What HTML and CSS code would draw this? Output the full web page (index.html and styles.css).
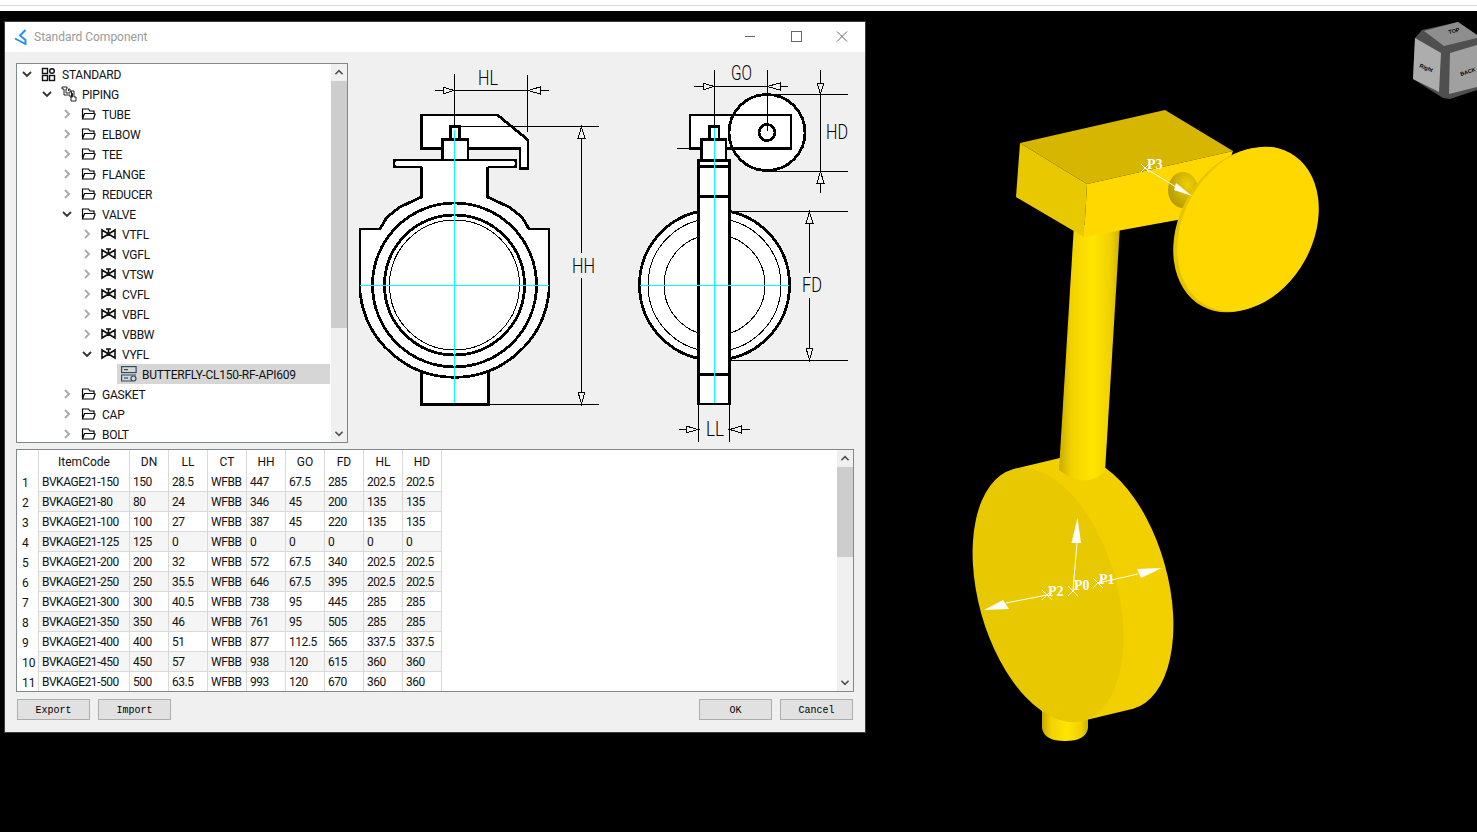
FILE: index.html
```html
<!DOCTYPE html>
<html lang="en">
<head>
<meta charset="utf-8">
<title>Standard Component</title>
<link rel="stylesheet" href="styles.css">
</head>
<body>
<svg class="defs" width="0" height="0" aria-hidden="true">
  <defs>
    <symbol id="ch-right" viewBox="0 0 10 12"><path d="M3 2l4 4-4 4" fill="none" stroke="currentColor" stroke-width="1.8"/></symbol>
    <symbol id="ch-down" viewBox="0 0 12 10"><path d="M2 3l4 4 4-4" fill="none" stroke="currentColor" stroke-width="1.8"/></symbol>
    <symbol id="ch-up" viewBox="0 0 12 10"><path d="M2 7l4-4 4 4" fill="none" stroke="currentColor" stroke-width="1.8"/></symbol>
    <symbol id="folder" viewBox="0 0 15 12"><path d="M1.5 11V1h6l1.500 2h4v2.500H3.500L1.500 11h11l1.800-5.500" fill="none" stroke="#000" stroke-width="1.200"/></symbol>
    <symbol id="valve" viewBox="0 0 15 12"><path d="M1 1.500v9M14 1.500v9M1 2l13 8M1 10l13-8M7.500 6V1.500M5 1h5M1 2v8l6.500-4zM14 2v8L7.500 6z" fill="none" stroke="#111" stroke-width="1.600"/></symbol>
    <symbol id="comp" viewBox="0 0 16 16"><g fill="none" stroke="#2f4d63" stroke-width="1.200"><rect x=".6" y=".6" width="14.500" height="6"/><path d="M3 3.600h4"/><path d="M11 15H.6V9H15"/><path d="M3 12h4"/><circle cx="12.500" cy="12.500" r="2.500"/></g></symbol>
    <linearGradient id="pipeU" x1="0" y1="0" x2="1" y2="0"><stop offset="0" stop-color="#c8aa00"/><stop offset=".2" stop-color="#f2d200"/><stop offset=".55" stop-color="#ffe600"/><stop offset=".85" stop-color="#f0d000"/><stop offset="1" stop-color="#cdb000"/></linearGradient>
    <linearGradient id="side" gradientUnits="userSpaceOnUse" x1="1100" y1="460" x2="1140" y2="720"><stop offset="0" stop-color="#f2d000"/><stop offset=".35" stop-color="#ffdc00"/><stop offset=".6" stop-color="#ffe000"/><stop offset=".85" stop-color="#e0c000"/><stop offset="1" stop-color="#b49a00"/></linearGradient>
    <radialGradient id="hole" cx=".65" cy=".35" r=".75"><stop offset="0" stop-color="#f0d000"/><stop offset="1" stop-color="#b09600"/></radialGradient>
  </defs>
</svg>

<header class="topstrip"></header>

<main class="desktop">
  <svg class="model" viewBox="0 11 1477 821" width="1477" height="821">
    <!-- lower stub -->
    <path d="M1042 700V728Q1044 741 1065 741Q1086 741 1088 728V700Z" fill="url(#pipeU)"/>
    <!-- upper pipe -->
    <g>
      <g transform="translate(1048 595) rotate(-15.600)">
        <path d="M0-130.500L51.400-128.600A69.300 130.500 0 0 1 51.400 132.400L0 130.500Z" fill="url(#side)"/>
      </g>
      <ellipse cx="1048" cy="595" rx="69.300" ry="130.500" transform="rotate(-15.600 1048 595)" class="disc-face"/>
      <path d="M1074 225H1120L1105 472Q1084 490 1059 470Z" fill="url(#pipeU)"/>
    </g>
    <!-- block -->
    <polygon points="1020,143 1165,110 1233,151 1087,184" class="blk-top"/>
    <polygon points="1020,143 1087,184 1084,237 1016,197" class="blk-left"/>
    <polygon points="1087,184 1233,151 1210,214 1084,237" class="blk-front"/>
    <ellipse cx="1183" cy="190" rx="15" ry="18" fill="url(#hole)"/>
    <!-- handle disc -->
    <ellipse cx="1244" cy="230" rx="65" ry="87" transform="rotate(29 1244 230)" class="ring"/>
    <ellipse cx="1248" cy="229" rx="65" ry="87" transform="rotate(29 1248 229)" class="blk-front"/>
    <!-- markers -->
    <g class="mk-line">
      <path d="M1141 164l8 8M1149 164l-8 8M1145 168L1176 187"/>
      <path d="M1068 586l10 10M1078 586l-10 10M1073 590L1077 543"/>
      <path d="M1093 578l10 10M1103 578l-10 10M1098 583L1138 574"/>
      <path d="M1042 590l10 10M1052 590l-10 10M1047 595L1006 603"/>
    </g>
    <g class="mk-head">
      <polygon points="1192,196 1174,190 1176,183"/>
      <polygon points="1077.500,518 1071.500,543 1081,543"/>
      <polygon points="1162,568 1137,569 1141,578"/>
      <polygon points="984,610 1003,600 1009,609"/>
    </g>
    <text class="mk-text" x="1147" y="169">P3</text>
    <text class="mk-text" x="1074" y="590">P0</text>
    <text class="mk-text" x="1099" y="584">P1</text>
    <text class="mk-text" x="1048" y="596">P2</text>
    <!-- view cube -->
    <polygon points="1422,30 1415,38 1413,79 1443,98 1450,99 1477,90 1477,35 1458,22" class="cube-dark"/>
    <polygon points="1424,31 1458,22 1477,35 1477,38 1444,46" class="cube-top"/>
    <polygon points="1415,38 1441,53 1439,92 1413,79" class="cube-left"/>
    <polygon points="1450,53 1477,45 1477,87 1449,94" class="cube-right"/>
    <text class="cube-text" transform="translate(1449 34) rotate(-14)">TOP</text>
    <text class="cube-text" transform="translate(1419 67) rotate(22)">Right</text>
    <text class="cube-text" transform="translate(1461 76) rotate(-18)">BACK</text>
  </svg>

  <section class="dialog">
    <div class="titlebar">
      <svg class="applogo" viewBox="0 0 15 16" width="15" height="16"><path d="M11.500 1L6 6.500l5.500 4.500v4L1 9.500" fill="none" stroke="#1f8ff0" stroke-width="1.900"/></svg>
      <span class="title">Standard Component</span>
      <div class="winbtns">
        <svg class="winbtn" viewBox="0 0 46 30" width="46" height="30"><path d="M18 14.500h10" stroke="#666" fill="none"/></svg>
        <svg class="winbtn" viewBox="0 0 46 30" width="46" height="30"><rect x="18.500" y="9.500" width="10" height="10" stroke="#666" fill="none"/></svg>
        <svg class="winbtn" viewBox="0 0 46 30" width="46" height="30"><path d="M18 9.500l10 10M28 9.500l-10 10" stroke="#666" fill="none"/></svg>
      </div>
    </div>

    <div class="content">
      <div class="upper">
        <div class="tree">
          <ul class="tree-rows">
            <li class="node l0 open"><svg class="tw"><use href="#ch-down"/></svg><span class="label"><svg class="ic" viewBox="0 0 15 15"><g fill="none" stroke="#111" stroke-width="1.400"><rect x="1.500" y="1.500" width="5" height="5"/><circle cx="11" cy="4" r="2.300"/><rect x="1.500" y="8.500" width="5" height="5"/><rect x="8.500" y="8.500" width="5" height="5"/></g></svg>STANDARD</span></li>
            <li class="node l1 open"><svg class="tw"><use href="#ch-down"/></svg><span class="label"><svg class="ic ic-pipe" viewBox="0 0 16 16"><path d="M1 1H6V3H5V7H9V5.500H10.500V11H9V9H3V3H1ZM7.500 5V3H9V5H13V11H15V15H10V11H11.500V7" fill="none" stroke="#222" stroke-width="1"/></svg>PIPING</span></li>
            <li class="node l2"><svg class="tw"><use href="#ch-right"/></svg><span class="label"><svg class="ic"><use href="#folder"/></svg>TUBE</span></li>
            <li class="node l2"><svg class="tw"><use href="#ch-right"/></svg><span class="label"><svg class="ic"><use href="#folder"/></svg>ELBOW</span></li>
            <li class="node l2"><svg class="tw"><use href="#ch-right"/></svg><span class="label"><svg class="ic"><use href="#folder"/></svg>TEE</span></li>
            <li class="node l2"><svg class="tw"><use href="#ch-right"/></svg><span class="label"><svg class="ic"><use href="#folder"/></svg>FLANGE</span></li>
            <li class="node l2"><svg class="tw"><use href="#ch-right"/></svg><span class="label"><svg class="ic"><use href="#folder"/></svg>REDUCER</span></li>
            <li class="node l2 open"><svg class="tw"><use href="#ch-down"/></svg><span class="label"><svg class="ic"><use href="#folder"/></svg>VALVE</span></li>
            <li class="node l3"><svg class="tw"><use href="#ch-right"/></svg><span class="label"><svg class="ic"><use href="#valve"/></svg>VTFL</span></li>
            <li class="node l3"><svg class="tw"><use href="#ch-right"/></svg><span class="label"><svg class="ic"><use href="#valve"/></svg>VGFL</span></li>
            <li class="node l3"><svg class="tw"><use href="#ch-right"/></svg><span class="label"><svg class="ic"><use href="#valve"/></svg>VTSW</span></li>
            <li class="node l3"><svg class="tw"><use href="#ch-right"/></svg><span class="label"><svg class="ic"><use href="#valve"/></svg>CVFL</span></li>
            <li class="node l3"><svg class="tw"><use href="#ch-right"/></svg><span class="label"><svg class="ic"><use href="#valve"/></svg>VBFL</span></li>
            <li class="node l3"><svg class="tw"><use href="#ch-right"/></svg><span class="label"><svg class="ic"><use href="#valve"/></svg>VBBW</span></li>
            <li class="node l3 open"><svg class="tw"><use href="#ch-down"/></svg><span class="label"><svg class="ic"><use href="#valve"/></svg>VYFL</span></li>
            <li class="node l4 selected"><span class="tw"></span><span class="label"><svg class="ic ic-comp"><use href="#comp"/></svg>BUTTERFLY-CL150-RF-API609</span></li>
            <li class="node l2"><svg class="tw"><use href="#ch-right"/></svg><span class="label"><svg class="ic"><use href="#folder"/></svg>GASKET</span></li>
            <li class="node l2"><svg class="tw"><use href="#ch-right"/></svg><span class="label"><svg class="ic"><use href="#folder"/></svg>CAP</span></li>
            <li class="node l2"><svg class="tw"><use href="#ch-right"/></svg><span class="label"><svg class="ic"><use href="#folder"/></svg>BOLT</span></li>
          </ul>
          <div class="scrollbar">
            <svg class="sb-btn"><use href="#ch-up"/></svg>
            <div class="thumb thumb-tree"></div>
            <div class="sb-fill"></div>
            <svg class="sb-btn"><use href="#ch-down"/></svg>
          </div>
        </div>

        <svg class="drawing" viewBox="348 63 506 380" width="506" height="380">
          <!-- front view -->
          <rect x="421.500" y="365" width="67" height="39.500" class="thick"/>
          <path d="M421.500 167V197L400 207L387 217L380 229H360V292A95 95 0 0 0 549 292V229H529L522 217L509 207L487.500 197V167" class="thick"/>
          <path d="M421.500 167H396Q394 167 394 165V162Q394 160 396 160H514Q516 160 516 162V165Q516 167 514 167H487.500" class="thick"/>
          <path d="M421.500 115H497.500L528 140V168.500H520V148.500H421.500Z" class="thick"/>
          <rect x="442.500" y="139.500" width="25.500" height="20.500" class="thick"/>
          <rect x="450.500" y="126.500" width="9" height="13" class="thick"/>
          <circle cx="454.500" cy="285" r="82" class="ring-l"/>
          <circle cx="454.500" cy="285" r="70" class="ring-l"/>
          <circle cx="454.500" cy="285" r="65" class="hair"/>
          <path d="M454.500 130V403M360 285.500H549" class="cyan"/>
          <path d="M454.500 74V127M527.500 75V132M435 90.500H549M460 126.500H599M488 404.500H599M581.500 128V253M581.500 278V404" class="line"/>
          <polygon points="454,90.500 443,87 443,94" class="arrow"/>
          <polygon points="528,90.500 540,87 540,94" class="arrow"/>
          <polygon points="581.500,127 578,138 585,138" class="arrow"/>
          <polygon points="581.500,404 578,392 585,392" class="arrow"/>
          <text class="dim" x="478" y="85" textLength="20" lengthAdjust="spacingAndGlyphs">HL</text>
          <text class="dim" x="572" y="273" textLength="23" lengthAdjust="spacingAndGlyphs">HH</text>

          <!-- side view -->
          <circle cx="714.500" cy="285" r="75" class="ring-l filled"/>
          <circle cx="714.500" cy="285" r="66.500" class="hair"/>
          <circle cx="714.500" cy="285" r="50.500" class="hair"/>
          <rect x="690" y="115" width="101" height="33.500" class="thick"/>
          <circle cx="767" cy="132.500" r="38" class="thick"/>
          <path d="M729 115H791V148.500H732" class="thick nofill"/>
          <circle cx="767" cy="132.500" r="8" class="thick"/>
          <rect x="701.500" y="139.500" width="24.500" height="20.500" class="thick"/>
          <rect x="709.500" y="126.500" width="9.500" height="13" class="thick"/>
          <rect x="698.500" y="160.500" width="31" height="243.500" class="thick"/>
          <path d="M698.500 166.500H729.500M698.500 196.500H729.500M698.500 374.500H729.500" class="thick nofill"/>
          <path d="M714.500 128V403M640 285.500H789" class="cyan"/>
          <path d="M714.500 70V127M767.500 70V131M694 86.500H788M677 148.500H690M820.500 70V193M767 94.500H848M767 171.500H848M729 211.500H848M730 360.500H848M809.500 212V273M809.500 298V360M698.500 404V442M729.500 404V442M679 429.500H698M730 429.500H750" class="line"/>
          <polygon points="714,86.500 703,83 703,90" class="arrow"/>
          <polygon points="767,86.500 780,83 780,90" class="arrow"/>
          <polygon points="820.500,94 817,83 824,83" class="arrow"/>
          <polygon points="820.500,171.500 817,183 824,183" class="arrow"/>
          <polygon points="809.500,212 806,223 813,223" class="arrow"/>
          <polygon points="809.500,360 806,348 813,348" class="arrow"/>
          <polygon points="698,429.500 686,426 686,433" class="arrow"/>
          <polygon points="730,429.500 741,426 741,433" class="arrow"/>
          <text class="dim" x="731" y="80" textLength="21" lengthAdjust="spacingAndGlyphs">GO</text>
          <text class="dim" x="826" y="139" textLength="22" lengthAdjust="spacingAndGlyphs">HD</text>
          <text class="dim" x="802" y="292" textLength="20" lengthAdjust="spacingAndGlyphs">FD</text>
          <text class="dim" x="706" y="436" textLength="18" lengthAdjust="spacingAndGlyphs">LL</text>
        </svg>
      </div>

      <div class="grid">
        <table class="spec">
          <thead>
            <tr><th class="rn"></th><th class="code">ItemCode</th><th>DN</th><th>LL</th><th>CT</th><th>HH</th><th>GO</th><th>FD</th><th>HL</th><th>HD</th></tr>
          </thead>
          <tbody>
            <tr><th class="rn">1</th><td>BVKAGE21-150</td><td>150</td><td>28.5</td><td>WFBB</td><td>447</td><td>67.5</td><td>285</td><td>202.5</td><td>202.5</td></tr>
            <tr><th class="rn">2</th><td>BVKAGE21-80</td><td>80</td><td>24</td><td>WFBB</td><td>346</td><td>45</td><td>200</td><td>135</td><td>135</td></tr>
            <tr><th class="rn">3</th><td>BVKAGE21-100</td><td>100</td><td>27</td><td>WFBB</td><td>387</td><td>45</td><td>220</td><td>135</td><td>135</td></tr>
            <tr><th class="rn">4</th><td>BVKAGE21-125</td><td>125</td><td>0</td><td>WFBB</td><td>0</td><td>0</td><td>0</td><td>0</td><td>0</td></tr>
            <tr><th class="rn">5</th><td>BVKAGE21-200</td><td>200</td><td>32</td><td>WFBB</td><td>572</td><td>67.5</td><td>340</td><td>202.5</td><td>202.5</td></tr>
            <tr><th class="rn">6</th><td>BVKAGE21-250</td><td>250</td><td>35.5</td><td>WFBB</td><td>646</td><td>67.5</td><td>395</td><td>202.5</td><td>202.5</td></tr>
            <tr><th class="rn">7</th><td>BVKAGE21-300</td><td>300</td><td>40.5</td><td>WFBB</td><td>738</td><td>95</td><td>445</td><td>285</td><td>285</td></tr>
            <tr><th class="rn">8</th><td>BVKAGE21-350</td><td>350</td><td>46</td><td>WFBB</td><td>761</td><td>95</td><td>505</td><td>285</td><td>285</td></tr>
            <tr><th class="rn">9</th><td>BVKAGE21-400</td><td>400</td><td>51</td><td>WFBB</td><td>877</td><td>112.5</td><td>565</td><td>337.5</td><td>337.5</td></tr>
            <tr><th class="rn">10</th><td>BVKAGE21-450</td><td>450</td><td>57</td><td>WFBB</td><td>938</td><td>120</td><td>615</td><td>360</td><td>360</td></tr>
            <tr><th class="rn">11</th><td>BVKAGE21-500</td><td>500</td><td>63.5</td><td>WFBB</td><td>993</td><td>120</td><td>670</td><td>360</td><td>360</td></tr>
          </tbody>
        </table>
        <div class="scrollbar">
          <svg class="sb-btn"><use href="#ch-up"/></svg>
          <div class="thumb thumb-grid"></div>
          <div class="sb-fill"></div>
          <svg class="sb-btn"><use href="#ch-down"/></svg>
        </div>
      </div>

      <div class="actions">
        <button class="btn" type="button">Export</button>
        <button class="btn" type="button">Import</button>
        <span class="actions-gap"></span>
        <button class="btn" type="button">OK</button>
        <button class="btn" type="button">Cancel</button>
      </div>
    </div>
  </section>
</main>
</body>
</html>
```
FILE: styles.css
```css
* { box-sizing: border-box; }
html, body { margin: 0; padding: 0; height: 100%; overflow: hidden; }
body {
  display: flex;
  flex-direction: column;
  width: 1477px;
  height: 832px;
  background: #000;
  font-family: Roboto, "Noto Sans", sans-serif;
  font-size: 12px;
  color: #111;
}
.defs { position: absolute; }

.topstrip {
  height: 11px;
  flex: none;
  background: #fff;
  border-top: 5px solid #fff;
  position: relative;
}
.topstrip::before {
  content: "";
  display: block;
  height: 1px;
  background: #d3dbe4;
}

.desktop { position: relative; flex: 1; background: #000; }
.model { position: absolute; left: 0; top: 0; display: block; }

.disc-face { fill: #e8c800; }
.blk-top { fill: #d6b600; }
.blk-left { fill: #e8c800; }
.blk-front { fill: #ffd800; }
.ring { fill: #e6c400; }
.mk-line { stroke: #fff; stroke-width: 1; fill: none; }
.mk-head { fill: #fff; }
.mk-text { font-family: "Liberation Serif", serif; font-weight: 700; font-size: 14px; fill: #fff; }
.cube-dark { fill: #4f4f4f; }
.cube-top { fill: #8e8e8e; }
.cube-left { fill: #adadad; }
.cube-right { fill: #a0a0a0; }
.cube-text { font-family: "Liberation Sans", sans-serif; font-size: 5.500px; font-weight: 700; fill: #000; }

.dialog {
  position: absolute;
  left: 4px;
  top: 10px;
  width: 862px;
  height: 712px;
  display: flex;
  flex-direction: column;
  background: #f0f0f0;
  border: 1px solid #3d3d3d;
}

.titlebar {
  flex: none;
  height: 30px;
  background: #fff;
  display: flex;
  align-items: center;
  padding-left: 9px;
}
.applogo { flex: none; margin-right: 5px; }
.title { color: #999; font-size: 12px; }
.winbtns { margin-left: auto; display: flex; margin-right: 0; }
.winbtn { display: block; }

.content {
  flex: 1;
  display: flex;
  flex-direction: column;
  padding: 11px 11px 12px 11px;
  min-height: 0;
}

.upper { display: flex; flex: none; height: 380px; }
.tree {
  width: 332px;
  height: 380px;
  background: #fff;
  border: 1px solid #828790;
  display: flex;
  flex: none;
  overflow: hidden;
}
.tree-rows {
  list-style: none;
  margin: 0 1px 0 0;
  padding: 0;
  flex: 1;
  min-width: 0;
  height: 378px;
  overflow: hidden;
}
.node { display: flex; height: 20px; align-items: center; line-height: 20px; white-space: nowrap; }
.l0 { padding-left: 0; }
.l1 { padding-left: 20px; }
.l2 { padding-left: 40px; }
.l3 { padding-left: 60px; }
.l4 { padding-left: 80px; }
.tw { flex: none; width: 20px; height: 12px; color: #a9a9a9; display: block; }
.open > .tw { color: #333; height: 10px; }
.label { flex: 1; display: flex; align-items: center; height: 20px; padding-left: 4px; padding-top: 1px; min-width: 0; letter-spacing: -.24px; }
.ic { flex: none; width: 15px; height: 12px; margin-right: 6px; margin-top: -1px; display: block; }
.l0 .ic { height: 15px; }
.l1 .ic-pipe { width: 16px; height: 16px; margin-right: 5px; }
.ic-comp { width: 16px; height: 16px; margin-right: 5px; }
.selected .label { background: #d6d6d6; }

.scrollbar {
  flex: none;
  width: 16px;
  background: #f0f0f0;
  display: flex;
  flex-direction: column;
}
.sb-btn { flex: none; width: 16px; height: 17px; padding: 4px 2px; color: #505050; display: block; }
.thumb { flex: none; background: #cdcdcd; }
.thumb-tree { height: 247px; }
.thumb-grid { height: 90px; }
.sb-fill { flex: 1; }

.drawing { flex: none; display: block; shape-rendering: crispEdges; overflow: visible; }
.thick { fill: #fff; stroke: #000; stroke-width: 2.8; }
.nofill { fill: none; }
.ring-l { fill: none; stroke: #000; stroke-width: 2.8; }
.filled { fill: #fff; }
.hair { fill: none; stroke: #000; stroke-width: 1; }
.line { fill: none; stroke: #000; stroke-width: 1; }
.cyan { fill: none; stroke: #00ffff; stroke-width: 1; }
.arrow { fill: #f0f0f0; stroke: #000; stroke-width: 1; }
.dim { font-family: Roboto, "Liberation Sans", sans-serif; font-weight: 300; font-size: 21px; fill: #000; }

.grid {
  flex: none;
  margin-top: 6px;
  height: 243px;
  background: #fff;
  border: 1px solid #828790;
  display: flex;
  overflow: hidden;
}
.spec {
  border-collapse: separate;
  border-spacing: 0;
  table-layout: fixed;
  width: 425px;
  height: 242px;
  margin-right: auto;
  font-size: 12px;
}
.spec th, .spec td {
  padding: 1px 0 0 3px;
  font-weight: 400;
  text-align: left;
  border-right: 1px solid #d9d9d9;
  border-bottom: 1px solid #d9d9d9;
  height: 20px;
  line-height: 18px;
  white-space: nowrap;
  overflow: hidden;
  width: 39px;
}
.spec td { letter-spacing: -.45px; }
.spec thead th { height: 22px; text-align: center; padding: 1px 0 0; border-bottom: 0; }
.spec .rn { width: 22px; padding-left: 5px; padding-top: 2px; border-bottom: 0; }
.spec thead .code { width: 91px; }
.spec tbody tr:nth-child(even) td { background: #f5f5f5; }

.actions { flex: none; margin-top: 7px; height: 21px; padding: 0 1px; display: flex; gap: 8px; }
.actions-gap { flex: 1; }
.btn {
  width: 73px;
  height: 21px;
  padding: 2px 0 0;
  background: #e1e1e1;
  border: 1px solid #adadad;
  font-family: "Liberation Mono", monospace;
  font-size: 10px;
  color: #000;
}
```
